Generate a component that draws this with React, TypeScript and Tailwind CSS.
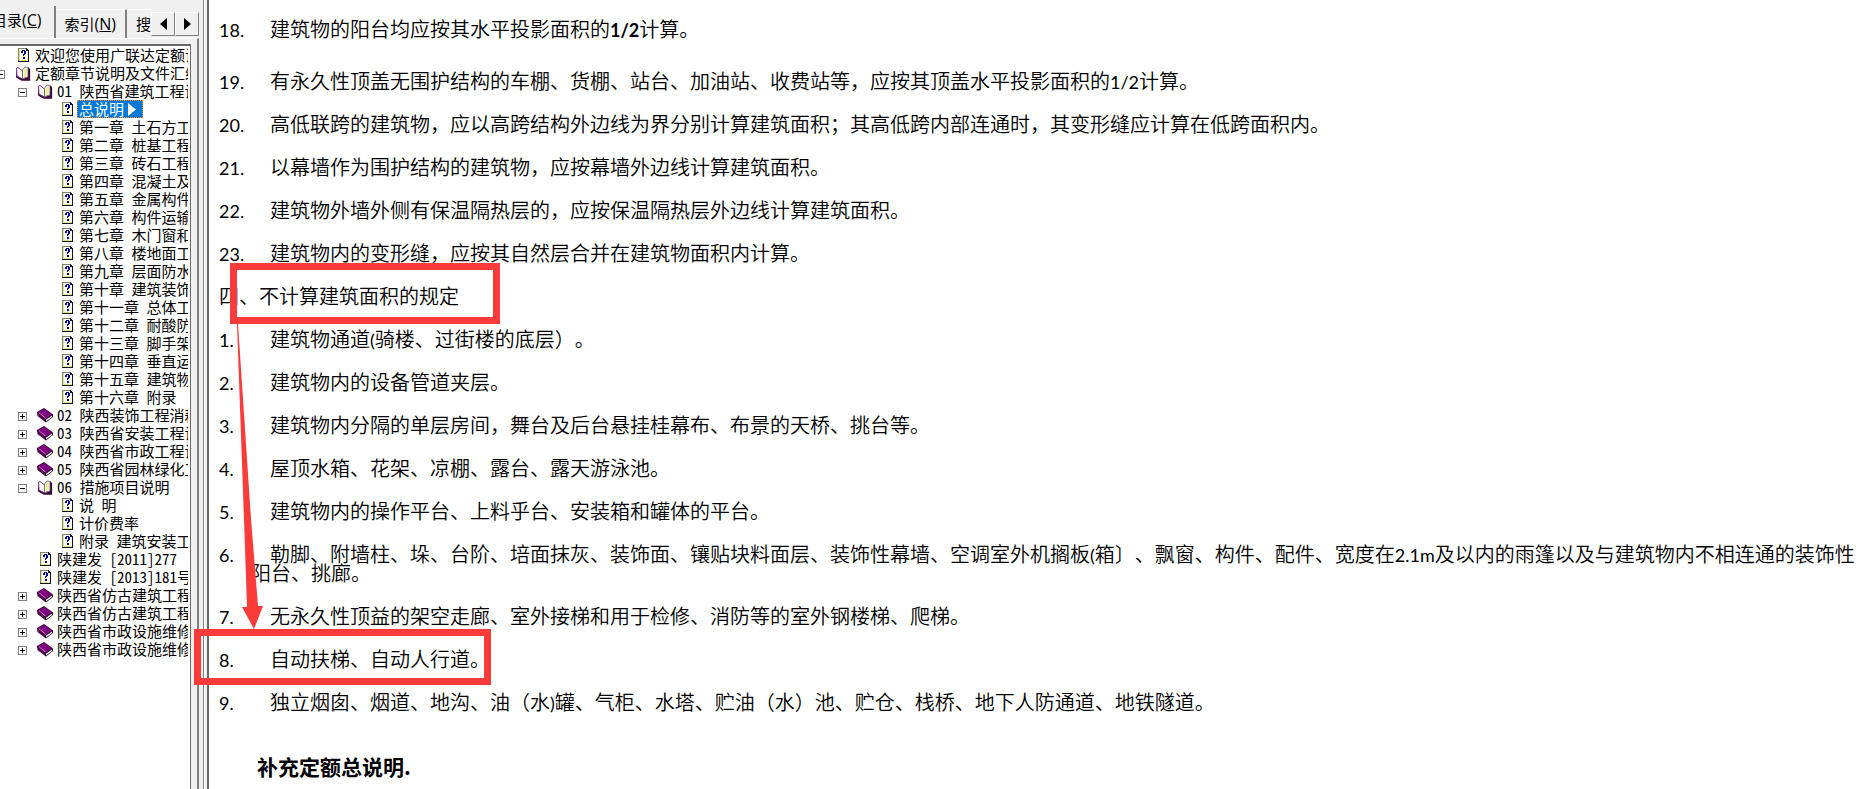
import { Fragment, useState } from "react";
import type { ReactNode } from "react";

type IconKind = "page" | "open" | "book";

interface TreeNode {
  label: string;
  icon: IconKind;
  expandable?: boolean;
  children?: TreeNode[];
}

const page = (label: string): TreeNode => ({ label, icon: "page" });
const book = (label: string): TreeNode => ({ label, icon: "book", expandable: true });

const TREE: TreeNode[] = [
  page("欢迎您使用广联达定额说明"),
  {
    label: "定额章节说明及文件汇编",
    icon: "open",
    expandable: true,
    children: [
      {
        label: "01\u2002陕西省建筑工程说明",
        icon: "open",
        expandable: true,
        children: [
          page("总说明"),
          page("第一章\u2002土石方工程"),
          page("第二章\u2002桩基工程"),
          page("第三章\u2002砖石工程"),
          page("第四章\u2002混凝土及钢筋"),
          page("第五章\u2002金属构件"),
          page("第六章\u2002构件运输"),
          page("第七章\u2002木门窗和木"),
          page("第八章\u2002楼地面工程"),
          page("第九章\u2002层面防水"),
          page("第十章\u2002建筑装饰"),
          page("第十一章\u2002总体工程"),
          page("第十二章\u2002耐酸防腐"),
          page("第十三章\u2002脚手架"),
          page("第十四章\u2002垂直运输"),
          page("第十五章\u2002建筑物"),
          page("第十六章\u2002附录"),
        ],
      },
      book("02\u2002陕西装饰工程消耗"),
      book("03\u2002陕西省安装工程说明"),
      book("04\u2002陕西省市政工程说明"),
      book("05\u2002陕西省园林绿化工程"),
      {
        label: "06\u2002措施项目说明",
        icon: "open",
        expandable: true,
        children: [page("说\u2002明"), page("计价费率"), page("附录\u2002建筑安装工程")],
      },
      page("陕建发\u2002[2011]277"),
      page("陕建发\u2002[2013]181号"),
      book("陕西省仿古建筑工程"),
      book("陕西省仿古建筑工程"),
      book("陕西省市政设施维修"),
      book("陕西省市政设施维修"),
    ],
  },
];

const AREA_RULES: ReactNode[] = [
  <>
    建筑物的阳台均应按其水平投影面积的
    <b className="font-['Lato'] text-[18px] leading-[14px]">1/2</b>计算。
  </>,
  <>
    有永久性顶盖无围护结构的车棚、货棚、站台、加油站、收费站等，应按其顶盖水平投影面积的<Latin>1/2</Latin>计算。
  </>,
  "高低联跨的建筑物，应以高跨结构外边线为界分别计算建筑面积；其高低跨内部连通时，其变形缝应计算在低跨面积内。",
  "以幕墙作为围护结构的建筑物，应按幕墙外边线计算建筑面积。",
  "建筑物外墙外侧有保温隔热层的，应按保温隔热层外边线计算建筑面积。",
  "建筑物内的变形缝，应按其自然层合并在建筑物面积内计算。",
];

const EXCLUDED: ReactNode[] = [
  <>
    建筑物通道<Latin>(</Latin>骑楼、过街楼的底层）。
  </>,
  "建筑物内的设备管道夹层。",
  "建筑物内分隔的单层房间，舞台及后台悬挂桂幕布、布景的天桥、挑台等。",
  "屋顶水箱、花架、凉棚、露台、露天游泳池。",
  "建筑物内的操作平台、上料乎台、安装箱和罐体的平台。",
  <>
    勒脚、附墙柱、垛、台阶、培面抹灰、装饰面、镶贴块料面层、装饰性幕墙、空调室外机搁板
    <Latin>(</Latin>箱〕、飘窗、构件、配件、宽度在<Latin>2.1m</Latin>
    及以内的雨篷以及与建筑物内不相连通的装饰性阳台、挑廊。
  </>,
  "无永久性顶益的架空走廊、室外接梯和用于检修、消防等的室外钢楼梯、爬梯。",
  "自动扶梯、自动人行道。",
  <>
    独立烟囱、烟道、地沟、油（水<Latin>)</Latin>罐、气柜、水塔、贮油（水）池、贮仓、栈桥、地下人防通道、地铁隧道。
  </>,
];

function Latin({ children }: { children: ReactNode }) {
  return <span className="font-['Lato'] text-[18px] leading-[14px] font-normal">{children}</span>;
}

function NodeIcon({ kind }: { kind: IconKind }) {
  if (kind === "page") {
    return (
      <svg width="16" height="16" viewBox="0 0 16 16" shapeRendering="crispEdges" aria-hidden="true">
        <path d="M3 1h8l3 3v11H3z" fill="#fffff0" />
        <path d="M3 1h8v1H4v12H3z" fill="#808080" />
        <path d="M4 2h1v12H4zM5 13h8v1H5z" fill="#e6e67a" />
        <path d="M11 1h1v1h1v1h1v12H3v-1h10V4h-2z" fill="#101030" />
        <path d="M7 3h3v1H7zM6 4h2v2H6zM9 4h2v3H9zM8 7h2v1H8zM8 8h1v1H8zM8 10h2v2H8z" fill="#0000a0" />
      </svg>
    );
  }
  if (kind === "open") {
    return (
      <svg width="16" height="16" viewBox="0 0 16 16" aria-hidden="true">
        <path d="M1 3v9l5 3h9V4l-2-2v10l-5 2-5-3z" fill="#3a083a" />
        <path d="M1.500 3L3 2.500 7.500 6v8L2 11z" fill="#fff" stroke="#7a3a7a" strokeWidth="1" />
        <path d="M7.500 14V5L10 2l3 .5V12l-3 .5z" fill="#fff" stroke="#606060" strokeWidth=".8" />
        <path d="M8.500 5l3.500-2v8l-3.500 1.500z" fill="#f2eca0" />
        <path d="M1.500 12l5.500 3h7.500V4" fill="none" stroke="#3a083a" strokeWidth="1.300" />
      </svg>
    );
  }
  return (
    <svg width="16" height="16" viewBox="0 0 16 16" aria-hidden="true">
      <path d="M0 5L7 1l9 6.500v2.500L9 15.500 0.500 9z" fill="#200020" />
      <path d="M.8 5.500L7 1.800l8 5.600-6.500 4.400z" fill="#800080" />
      <path d="M.8 6l7.500 6v2.500L1 8.700z" fill="#600060" />
      <path d="M9 12.800l6-4.200v1.400L9 14.600z" fill="#fff" />
      <path d="M2 5.800L8.500 11" stroke="#d8a0d8" strokeWidth=".8" />
    </svg>
  );
}

function Expander({ open, onToggle, label }: { open: boolean; onToggle: () => void; label: string }) {
  return (
    <button type="button" aria-label={label} aria-expanded={open} onClick={onToggle} className="block">
      <svg width="9" height="9" viewBox="0 0 9 9" shapeRendering="crispEdges" aria-hidden="true">
        <rect x=".5" y=".5" width="8" height="8" fill="#fff" stroke="#808080" />
        <path d="M2 4h5v1H2z" fill="#000" />
        {!open && <path d="M4 2h1v5H4z" fill="#000" />}
      </svg>
    </button>
  );
}

function TreeItem({
  node,
  selected,
  onSelect,
}: {
  node: TreeNode;
  selected: string;
  onSelect: (label: string) => void;
}) {
  const [open, setOpen] = useState(Boolean(node.children));
  const active = node.label === selected;
  return (
    <li>
      <div className="flex h-[18px] items-center">
        <span className="mr-[10px] w-[9px] shrink-0 pt-[2px]">
          {node.expandable && <Expander open={open} onToggle={() => setOpen(!open)} label={node.label} />}
        </span>
        <span className="mr-[2px] shrink-0">
          <NodeIcon kind={node.icon} />
        </span>
        <a
          href="#content"
          onClick={() => onSelect(node.label)}
          className={
            active
              ? "flex h-[18px] items-center border border-dotted border-[#ff8728] bg-[#0078d7] pr-[6px] pl-px leading-4 text-white"
              : "px-[2px] leading-[18px]"
          }
        >
          {node.label}
          {active && (
            <svg className="ml-1" width="8" height="13" viewBox="0 0 8 13" aria-hidden="true">
              <path d="M0 0l8 6.500-8 6.500z" fill="#fff" />
            </svg>
          )}
        </a>
      </div>
      {open && node.children && (
        <ul className="pl-[22px]">
          {node.children.map((child, i) => (
            <TreeItem key={i} node={child} selected={selected} onSelect={onSelect} />
          ))}
        </ul>
      )}
    </li>
  );
}

function Tab({ name, hotkey, active }: { name: string; hotkey: string; active?: boolean }) {
  return (
    <button
      type="button"
      role="tab"
      aria-selected={Boolean(active)}
      className={
        active
          ? "-ml-4 h-8 shrink-0 border-r-2 border-[#808080] pr-3 pb-1 pl-2"
          : "h-[29px] shrink-0 border-t border-r-2 border-t-white border-r-[#808080] px-[9px]"
      }
    >
      {name}
      <span className="text-[16px]">
        (<u>{hotkey}</u>)
      </span>
    </button>
  );
}

function ScrollButton({ direction }: { direction: "left" | "right" }) {
  return (
    <button
      type="button"
      aria-label={direction === "left" ? "向左滚动" : "向右滚动"}
      className="flex h-6 w-6 items-center justify-center border border-t-white border-r-[#808080] border-b-[#808080] border-l-white bg-[#f0f0f0]"
    >
      <svg width="7" height="12" viewBox="0 0 7 12" aria-hidden="true">
        <path d={direction === "left" ? "M7 0v12L0 6z" : "M0 0v12l7-6z"} fill="#000" />
      </svg>
    </button>
  );
}

function RuleList({ start, items }: { start: number; items: ReactNode[] }) {
  return (
    <ol start={start} className="space-y-6">
      {items.map((item, i) => (
        <li key={i} className={start + i === 18 ? "mb-[33px] pl-8" : "pl-8"}>
          <span className="-ml-8 inline-block w-[51px] font-['Lato'] text-[18px] leading-[14px] font-normal">
            {start + i}.
          </span>
          <Fragment>{item}</Fragment>
        </li>
      ))}
    </ol>
  );
}

function Annotations() {
  return (
    <div className="pointer-events-none absolute inset-0" aria-hidden="true">
      <div className="absolute top-[263px] left-[230px] h-[61px] w-[270px] border-[7px] border-[#fb3a3a]" />
      <div className="absolute top-[629px] left-[194px] h-[56px] w-[297px] border-[7px] border-[#fb3a3a]" />
      <svg className="absolute top-[324px] left-[230px]" width="40" height="306" viewBox="0 0 40 306">
        <path d="M7 0L8 0 21 195 28 282 33 282 24 305 12 283 17 283 14 195z" fill="#fb3a3a" />
      </svg>
    </div>
  );
}

export default function App() {
  const [selected, setSelected] = useState("总说明");
  return (
    <div className="relative flex h-screen overflow-hidden bg-white text-black">
      <aside className="flex w-[199px] shrink-0 flex-col bg-[#f0f0f0]">
        <div className="flex h-[38px] items-end font-['Open_Sans','Noto_Sans_CJK_SC',sans-serif] text-[15px] leading-5 whitespace-nowrap">
          <div role="tablist" className="flex min-w-0 flex-1 items-end overflow-hidden">
            <Tab name="目录" hotkey="C" active />
            <Tab name="索引" hotkey="N" />
            <Tab name="搜索" hotkey="S" />
          </div>
          <div className="flex pb-[2px]">
            <ScrollButton direction="left" />
            <ScrollButton direction="right" />
          </div>
        </div>
        <div className="flex min-h-0 flex-1 border-t border-r-2 border-t-white border-r-[#808080] pt-[5px] pr-[6px]">
          <nav className="min-w-0 flex-1 overflow-hidden border-t-2 border-r border-[#696969] bg-white pr-[2px] font-['Noto_Sans_Mono_CJK_SC','Noto_Sans_CJK_SC',monospace] text-[15px] whitespace-nowrap">
            <ul className="-ml-1 overflow-hidden">
              {TREE.map((node, i) => (
                <TreeItem key={i} node={node} selected={selected} onSelect={setSelected} />
              ))}
            </ul>
          </nav>
        </div>
      </aside>
      <div className="flex w-[10px] shrink-0 border-r-2 border-[#696969] bg-[#f0f0f0]">
        <div className="ml-1 w-[2px] border-l border-[#808080] bg-white" />
      </div>
      <main
        id="content"
        className="min-w-0 flex-1 overflow-hidden pt-[19px] pl-[10px] font-['Noto_Sans_CJK_SC',sans-serif] text-[20px] leading-[19px] font-[350] [text-spacing-trim:space-all]"
      >
        <RuleList start={18} items={AREA_RULES} />
        <h2 className="my-6">四、不计算建筑面积的规定</h2>
        <RuleList start={1} items={EXCLUDED} />
        <h2 className="mt-[46px] pl-[38px] text-[21px] font-bold">补充定额总说明.</h2>
      </main>
      <Annotations />
    </div>
  );
}
